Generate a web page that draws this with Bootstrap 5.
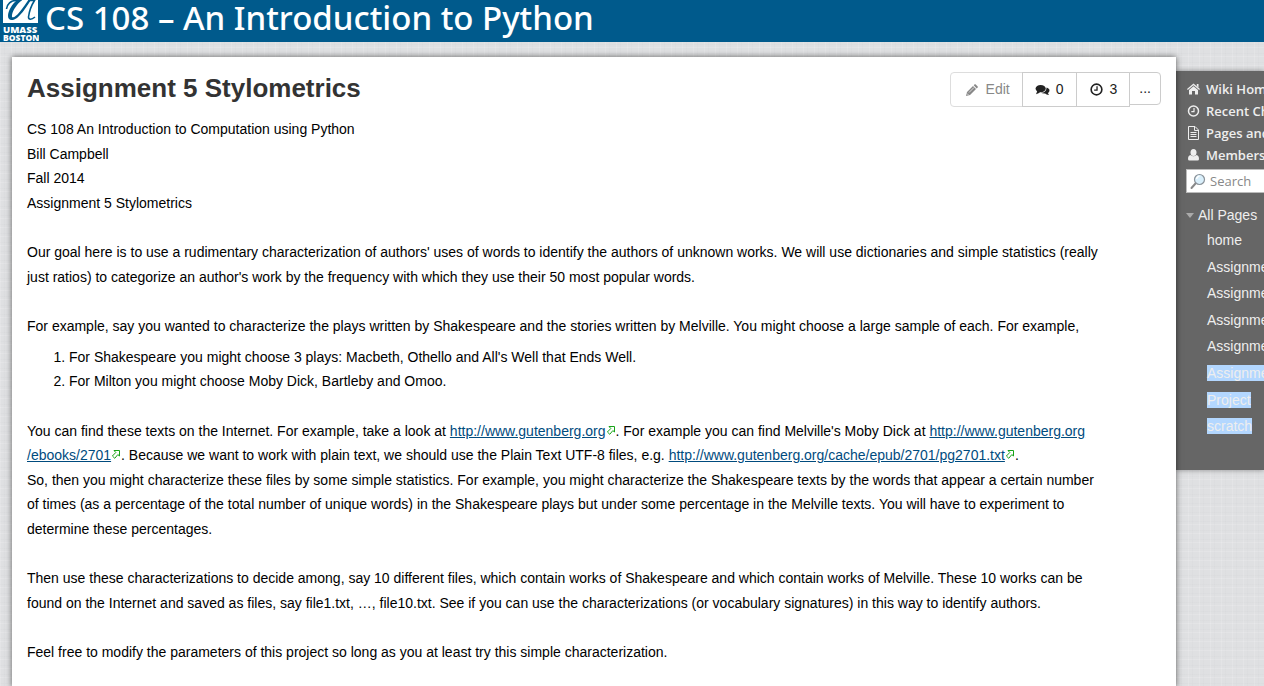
<!DOCTYPE html>
<html lang="en">
<head>
<meta charset="utf-8">
<meta name="viewport" content="width=device-width, initial-scale=1">
<title>CS 108 – An Introduction to Python</title>
<link href="https://cdn.jsdelivr.net/npm/bootstrap@5.3.0/dist/css/bootstrap.min.css" rel="stylesheet">
<style>
body {
  font: 14px/1.75 "Liberation Sans", Arial, sans-serif;
  color: #000;
  overflow-x: hidden;
  background-color: #dfe0e2;
  background-image:
    repeating-linear-gradient(90deg, rgba(255,255,255,.14) 0 1px, transparent 1px 4px, rgba(90,90,100,.02) 4px 5px, transparent 5px 11px),
    repeating-linear-gradient(0deg, rgba(255,255,255,.14) 0 1px, transparent 1px 3px, rgba(90,90,100,.02) 3px 4px, transparent 4px 9px);
}
.site-bar { background: #005a8c; height: 42px; padding-left: 2px; }
.site-name { font: 500 33px/36px "Noto Sans", "Open Sans", sans-serif; color: #fff; margin: 0 0 0 6px; white-space: nowrap; }
.sheet { background: #fff; margin: 15px 0 0 12px; padding: 15px 15px 22px; min-height: calc(100vh - 57px); min-width: 0; box-shadow: 0 0 6px rgba(0,0,0,.6); z-index: 1; }
.sheet-title { font-size: 26px; line-height: 32px; font-weight: 700; color: #333; margin: 0; }
.page-text { padding-right: 60px; margin-top: 10px; }
.page-text p { margin: 0 0 25px; }
.page-text ol { margin: 6px 0 25px; padding-left: 42px; }
.page-text a { color: #004b7e; text-decoration: underline; }
.ext { width: 10px; height: 9px; vertical-align: 1px; }
.tools .btn { --bs-btn-font-size: 14px; --bs-btn-line-height: 19px; --bs-btn-color: #222; --bs-btn-border-color: #ccc; --bs-btn-bg: #fff; --bs-btn-padding-x: 12px; --bs-btn-padding-y: 7px; --bs-btn-border-radius: 4px; }
.tools .btn-edit { --bs-btn-color: #888; --bs-btn-border-color: #ddd; padding-left: 15px; }
.tools .btn-more { --bs-btn-padding-x: 9px; --bs-btn-padding-y: 6px; }
.tools .count { gap: 6px; }
.side { flex: 0 0 88px; margin-top: 29px; padding: 7px 0 30px 10px; background: #666; color: #eee; overflow: hidden; white-space: nowrap; box-shadow: 0 0 5px rgba(0,0,0,.4); }
.side a { color: #eee; text-decoration: none; }
.side-nav a { font: 600 13px/22px "Open Sans", "Noto Sans", sans-serif; gap: 5px; }
.side-nav svg { flex: 0 0 15px; }
.find { width: 180px; height: 24px; margin-top: 3px; background: #fff; border: 1px solid #bbb; padding-left: 3px; }
.find input { border: 0; outline: 0; padding: 0; margin-left: 4px; width: 140px; font: 13px/20px "Open Sans", "Noto Sans", sans-serif; }
.find input::placeholder { color: #888; opacity: 1; }
.tree { margin-top: 10px; }
.tree summary { list-style: none; line-height: 24px; display: flex; align-items: center; gap: 4px; }
.tree summary::before { content: ""; border: 4px solid transparent; border-top: 5px solid #aaa; border-bottom: 0; }
.tree ul { margin: 0; padding-left: 21px; line-height: 1.9; }
.tree .picked { background: #b3d7ff; }
</style>
</head>
<body>
<svg class="d-none" aria-hidden="true">
  <symbol id="clock" viewBox="0 0 14 14"><circle cx="7" cy="7" r="5" fill="none" stroke="currentColor" stroke-width="1.5"/><path d="M7.500 4v3.600H4.800" fill="none" stroke="currentColor" stroke-width="1.200"/></symbol>
  <symbol id="ext" viewBox="0 0 10 9"><path d="M3 .5h5.500v5.500L6.800 4.600 3.800 8.300 1.400 6 4.800 2.500z" fill="#fff" stroke="#17a317"/></symbol>
</svg>
<header class="site-bar d-flex">
  <svg width="37" height="42" viewBox="0 0 37 42" class="flex-shrink-0" role="img" aria-label="UMass Boston">
    <rect x="1" width="35" height="23" fill="#fff"/>
    <path d="M4.500 9C5 4 9 .5 14 .5h4C13 4 9 10 8 15c-1 5 4 4 8 0C20 11 24 5 27 .5h5.500C29 6 27 13 26.500 17c0 3 3 3 6.500 0" fill="none" stroke="#005a8c" stroke-width="1.600"/>
    <path d="M15 0h5C15 4 11 10 10 15c-.5 4 2 4 6 0C20 11 24 5 27 0h2C25 6 20 14 15 18c-4 3-9 3-9-2C6 11 10 4 15 0z" fill="#005a8c"/>
    <text x="1" y="32.500" font-family="Open Sans, sans-serif" font-size="9.500" font-weight="800" fill="#fff">UMASS</text>
    <text x="1" y="41" font-family="Open Sans, sans-serif" font-size="8.500" font-weight="800" fill="#fff">BOSTON</text>
  </svg>
  <div class="site-name">CS 108 – An Introduction to Python</div>
</header>
<div class="d-flex align-items-start">
  <main class="sheet flex-grow-1 position-relative">
    <div class="d-flex justify-content-between align-items-start">
      <h1 class="sheet-title">Assignment 5 Stylometrics</h1>
      <div class="tools btn-group align-items-start" role="group" aria-label="Page tools">
        <button type="button" class="btn btn-edit d-flex align-items-center gap-2"><svg width="12" height="12" viewBox="0 0 12 12"><path fill="currentColor" d="M0 12l1-4 6-6 3 3-6 6zM7.700 1.300l1-1Q9 0 9.500.3l2.200 2.200q.4.500 0 1l-1 1z"/><path d="M3 8.500l5-5M1 9.500L2.500 11" stroke="#fff" stroke-width=".7"/></svg>Edit</button>
        <button type="button" class="btn count d-flex align-items-center" aria-label="Comments: 0"><svg width="15" height="12" viewBox="0 0 16 13" fill="currentColor"><ellipse cx="6" cy="5" rx="5.500" ry="4"/><path d="M2.500 7L1 11q3-.3 5-2.500zM12.500 3.800Q16 5 15.500 7.500 15.200 9 13.800 9.700L15 12q-3-.2-4.200-1.700Q8 10.500 6.300 9.600 12 9.300 12.500 3.800z"/></svg>0</button>
        <button type="button" class="btn count d-flex align-items-center" aria-label="Revisions: 3"><svg width="15" height="15"><use href="#clock"/></svg>3</button>
        <button type="button" class="btn btn-more" aria-label="More">...</button>
      </div>
    </div>
    <div class="page-text">
      <p>CS 108 An Introduction to Computation using Python<br>Bill Campbell<br>Fall 2014<br>Assignment 5 Stylometrics</p>
      <p>Our goal here is to use a rudimentary characterization of authors' uses of words to identify the authors of unknown works. We will use dictionaries and simple statistics (really just ratios) to categorize an author's work by the frequency with which they use their 50 most popular words.</p>
      <p class="mb-0">For example, say you wanted to characterize the plays written by Shakespeare and the stories written by Melville. You might choose a large sample of each. For example,</p>
      <ol>
        <li>For Shakespeare you might choose 3 plays: Macbeth, Othello and All's Well that Ends Well.</li>
        <li>For Milton you might choose Moby Dick, Bartleby and Omoo.</li>
      </ol>
      <p>You can find these texts on the Internet. For example, take a look at <a href="#">http://www.gutenberg.org</a><svg class="ext"><use href="#ext"/></svg>. For example you can find Melville's Moby Dick at <a href="#">http://www.gutenberg.org<wbr>/ebooks/2701</a><svg class="ext"><use href="#ext"/></svg>. Because we want to work with plain text, we should use the Plain Text UTF-8 files, e.g. <a href="#">http://www.gutenberg.org/cache/epub/2701/pg2701.txt</a><svg class="ext"><use href="#ext"/></svg>.<br>So, then you might characterize these files by some simple statistics. For example, you might characterize the Shakespeare texts by the words that appear a certain number of times (as a percentage of the total number of unique words) in the Shakespeare plays but under some percentage in the Melville texts. You will have to experiment to determine these percentages.</p>
      <p>Then use these characterizations to decide among, say 10 different files, which contain works of Shakespeare and which contain works of Melville. These 10 works can be found on the Internet and saved as files, say file1.txt, …, file10.txt. See if you can use the characterizations (or vocabulary signatures) in this way to identify authors.</p>
      <p class="mb-0">Feel free to modify the parameters of this project so long as you at least try this simple characterization.</p>
    </div>
  </main>
  <aside class="side">
    <nav class="side-nav">
      <a href="#" class="d-flex align-items-center"><svg width="15" height="14" viewBox="0 0 15 14" fill="currentColor"><path d="M7.500 1.500L14 7l-.8 1-5.700-4.800L1.800 8 1 7zM10.800 2h1.700v3.500l-1.700-1.400zM7.500 4.200L12 8v4.500H9V9H6v3.500H3V8z"/></svg>Wiki Home</a>
      <a href="#" class="d-flex align-items-center"><svg width="15" height="14"><use href="#clock"/></svg>Recent Changes</a>
      <a href="#" class="d-flex align-items-center"><svg width="15" height="14" viewBox="0 0 15 14" fill="none" stroke="currentColor"><path d="M2.500.5H9L12.500 4v9.500h-10zM8.500.5v4h4M4.500 6.500h6M4.500 8.500h6M4.500 10.500h6"/></svg>Pages and Files</a>
      <a href="#" class="d-flex align-items-center"><svg width="15" height="14" viewBox="0 0 15 14" fill="currentColor"><ellipse cx="7.500" cy="4.500" rx="3" ry="3.500"/><path d="M4.500 7q3 2.500 6 0Q13 7.500 13 11q0 1.500-1.500 1.500h-8Q2 12.500 2 11q0-3.500 2.500-4z"/></svg>Members</a>
    </nav>
    <div class="find d-flex align-items-center">
      <svg width="16" height="17" viewBox="0 0 16 17" class="flex-shrink-0"><path d="M5.500 10.500L1.500 15" stroke="#888" stroke-width="2" stroke-linecap="round"/><circle cx="9.500" cy="6.500" r="5" fill="#d9effb" stroke="#8a9299" stroke-width="1.200"/><path d="M6.500 6q.5-2.500 3-2.800" fill="none" stroke="#fff" stroke-width="1.300"/></svg>
      <input type="text" placeholder="Search" aria-label="Search">
    </div>
    <details class="tree" open>
      <summary>All Pages</summary>
      <ul class="list-unstyled">
        <li><a href="#">home</a></li>
        <li><a href="#">Assignment 1</a></li>
        <li><a href="#">Assignment 2</a></li>
        <li><a href="#">Assignment 3</a></li>
        <li><a href="#">Assignment 4</a></li>
        <li><a href="#" class="picked">Assignment 5</a></li>
        <li><a href="#" class="picked">Project</a></li>
        <li><a href="#" class="picked">scratch</a></li>
      </ul>
    </details>
  </aside>
</div>
<script src="https://cdn.jsdelivr.net/npm/bootstrap@5.3.0/dist/js/bootstrap.bundle.min.js"></script>
</body>
</html>
